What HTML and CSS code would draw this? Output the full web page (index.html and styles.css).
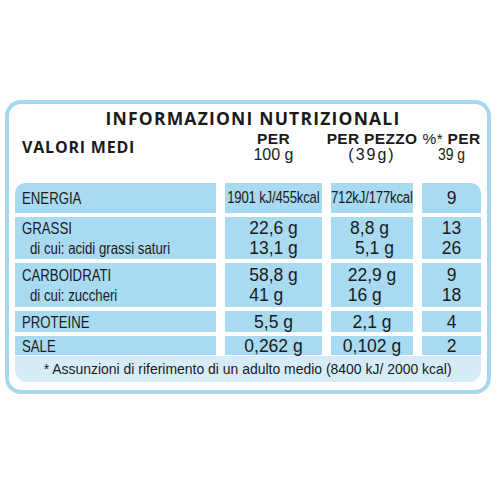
FILE: index.html
```html
<!DOCTYPE html>
<html lang="it">
<head>
    <meta charset="UTF-8">
    <meta name="viewport" content="width=device-width, initial-scale=1.0">
    <title>Informazioni nutrizionali</title>
    <link rel="stylesheet" href="styles.css">
</head>
<body>
    <div class="label">
        <h1 class="title">INFORMAZIONI NUTRIZIONALI</h1>

        <div class="head">
            <div class="head-name">VALORI MEDI</div>
            <div class="head-col"><b>PER</b><span>100 g</span></div>
            <div class="head-col"><b>PER PEZZO</b><span class="wide">(39g)</span></div>
            <div class="head-col"><b><i>%*</i> PER</b><span class="cond">39 g</span></div>
        </div>

        <div class="table">
            <div class="cell name top-left"><span class="cond">ENERGIA</span></div>
            <div class="cell kj"><span class="cond">1901 kJ/455kcal</span></div>
            <div class="cell kj"><span class="cond">712kJ/177kcal</span></div>
            <div class="cell num top-right">9</div>

            <div class="cell name"><span class="cond">GRASSI</span><span class="cond sub">di cui: acidi grassi saturi</span></div>
            <div class="cell num"><span class="stack">22,6 g<br>13,1 g</span></div>
            <div class="cell num"><span class="stack">8,8 g<br>&nbsp;5,1 g</span></div>
            <div class="cell num">13<br>26</div>

            <div class="cell name"><span class="cond">CARBOIDRATI</span><span class="cond sub">di cui: zuccheri</span></div>
            <div class="cell num"><span class="stack">58,8 g<br>41 g</span></div>
            <div class="cell num"><span class="stack">22,9 g<br>16 g</span></div>
            <div class="cell num">9<br>18</div>

            <div class="cell name"><span class="cond">PROTEINE</span></div>
            <div class="cell num">5,5 g</div>
            <div class="cell num">2,1 g</div>
            <div class="cell num">4</div>

            <div class="cell name"><span class="cond">SALE</span></div>
            <div class="cell num">0,262 g</div>
            <div class="cell num">0,102 g</div>
            <div class="cell num">2</div>
        </div>

        <div class="note"><span class="cond">* Assunzioni di riferimento di un adulto medio (8400 kJ/ 2000 kcal)</span></div>
    </div>
</body>
</html>
```

FILE: styles.css
```css
* {
    margin: 0;
    padding: 0;
    box-sizing: border-box;
}

body {
    background: #fff;
    color: #1a1a1a;
    font-family: "Liberation Sans", Arial, sans-serif;
}

/* condensed look: Arial Narrow is not installed */
.cond {
    display: inline-block;
    transform: scaleX(0.82);
    white-space: nowrap;
}

.label {
    margin: 100px 0 0 5px;
    width: 486px;
    height: 294px;
    border: 4px solid #a7d7ee;
    border-radius: 16px;
    padding: 5px 6px 8px;
}

.title {
    height: 19px;
    padding-left: 10px;
    line-height: 19px;
    text-align: center;
    font-family: "Open Sans", sans-serif;
    font-size: 17.5px;
    font-weight: 700;
    letter-spacing: 1.2px;
}

.head,
.table {
    display: grid;
    grid-template-columns: 201px 97px 82px 59px;
    column-gap: 9px;
}

.head {
    margin: 3px 0 21px;
    height: 31px;
}

.head-name {
    align-self: center;
    padding-left: 7px;
    font-family: "Open Sans", sans-serif;
    font-size: 16px;
    line-height: 16px;
    font-weight: 700;
    letter-spacing: 0.8px;
}

.head-col {
    display: flex;
    flex-direction: column;
    align-items: center;
    line-height: 15px;
}

.head-col b {
    font-size: 15.5px;
    font-weight: 700;
    letter-spacing: 0.3px;
    white-space: nowrap;
}

.head-col i {
    font-style: normal;
    font-weight: 400;
}

.head-col span {
    margin-top: 1px;
    font-size: 16px;
}

.head-col .wide {
    letter-spacing: 2px;
}

.head-col .cond {
    font-size: 17px;
}

.table {
    grid-template-rows: 30px 42px 44px 21px 19px;
    row-gap: 4px;
}

.cell {
    background: #a8daf2;
    display: flex;
    flex-direction: column;
    justify-content: center;
    line-height: 20px;
    white-space: nowrap;
}

.name {
    align-items: flex-start;
    padding-left: 7px;
    font-size: 16.5px;
}

.name .cond {
    transform-origin: left center;
    transform: scaleX(0.8);
}

.sub {
    padding-left: 10px;
}

.num {
    align-items: center;
    text-align: center;
    font-size: 17.5px;
}

.kj {
    align-items: center;
    font-size: 16px;
    letter-spacing: -0.2px;
}

.stack {
    text-align: left;
}

.top-left {
    border-top-left-radius: 10px;
}

.top-right {
    border-top-right-radius: 10px;
}

.note {
    margin-top: 1px;
    height: 26px;
    line-height: 26px;
    background: #d6edf9;
    border-radius: 0 0 12px 12px;
    text-align: center;
    font-size: 15.5px;
    overflow: hidden;
}

.note .cond {
    transform: scaleX(0.9);
}
```
